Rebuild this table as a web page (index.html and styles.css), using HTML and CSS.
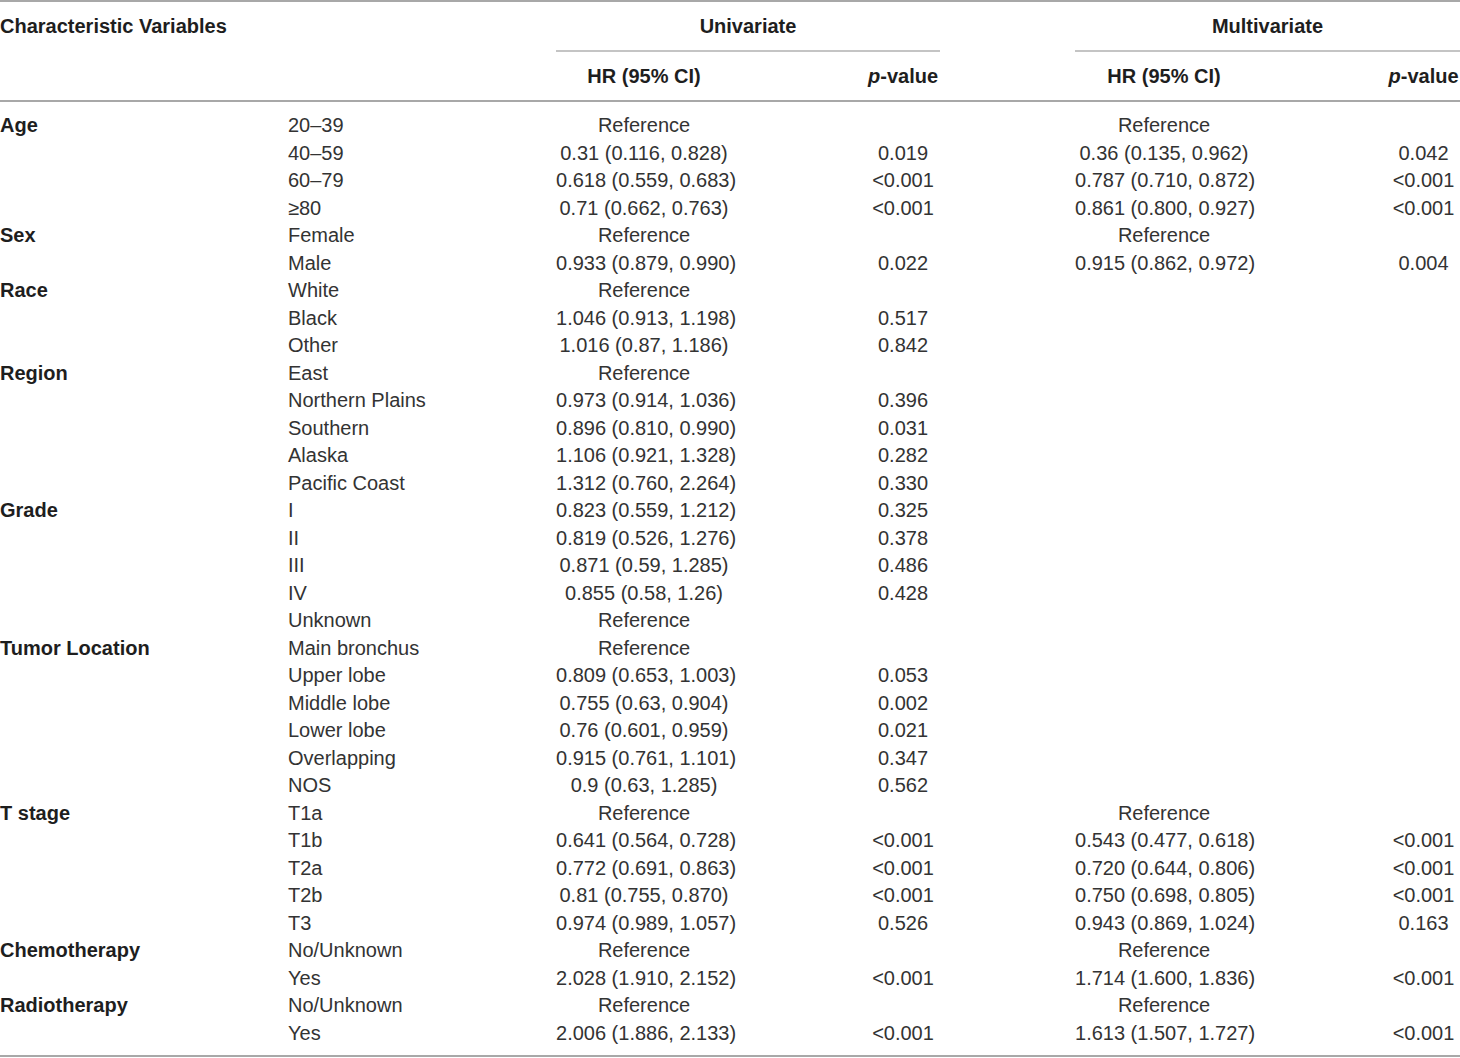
FILE: index.html
```html
<!DOCTYPE html>
<html lang="en">
<head>
<meta charset="utf-8">
<title>Cox regression table</title>
<link rel="stylesheet" href="styles.css">
</head>
<body>
<table class="t">
  <colgroup>
    <col class="c-var"><col class="c-sub"><col class="c-hr"><col class="c-p"><col class="c-gap"><col class="c-hr2"><col class="c-p2">
  </colgroup>
  <thead>
    <tr class="h1">
      <th class="lbl" colspan="2">Characteristic Variables</th>
      <th class="grp" colspan="2">Univariate</th>
      <th></th>
      <th class="grp" colspan="2">Multivariate</th>
    </tr>
    <tr class="h2">
      <th></th><th></th>
      <th class="hr">HR (95% CI)</th>
      <th class="p"><i>p</i>-value</th>
      <th></th>
      <th class="hr">HR (95% CI)</th>
      <th class="p p2"><i>p</i>-value</th>
    </tr>
  </thead>
  <tbody>
    <tr class="first"><td class="v">Age</td><td>20–39</td><td class="hr">Reference</td><td class="p"></td><td></td><td class="hr">Reference</td><td class="p p2"></td></tr>
    <tr><td class="v"></td><td>40–59</td><td class="hr">0.31 (0.116, 0.828)</td><td class="p">0.019</td><td></td><td class="hr">0.36 (0.135, 0.962)</td><td class="p p2">0.042</td></tr>
    <tr><td class="v"></td><td>60–79</td><td class="hr">0.618 (0.559, 0.683)</td><td class="p">&lt;0.001</td><td></td><td class="hr">0.787 (0.710, 0.872)</td><td class="p p2">&lt;0.001</td></tr>
    <tr><td class="v"></td><td>≥80</td><td class="hr">0.71 (0.662, 0.763)</td><td class="p">&lt;0.001</td><td></td><td class="hr">0.861 (0.800, 0.927)</td><td class="p p2">&lt;0.001</td></tr>
    <tr><td class="v">Sex</td><td>Female</td><td class="hr">Reference</td><td class="p"></td><td></td><td class="hr">Reference</td><td class="p p2"></td></tr>
    <tr><td class="v"></td><td>Male</td><td class="hr">0.933 (0.879, 0.990)</td><td class="p">0.022</td><td></td><td class="hr">0.915 (0.862, 0.972)</td><td class="p p2">0.004</td></tr>
    <tr><td class="v">Race</td><td>White</td><td class="hr">Reference</td><td class="p"></td><td></td><td class="hr"></td><td class="p p2"></td></tr>
    <tr><td class="v"></td><td>Black</td><td class="hr">1.046 (0.913, 1.198)</td><td class="p">0.517</td><td></td><td class="hr"></td><td class="p p2"></td></tr>
    <tr><td class="v"></td><td>Other</td><td class="hr">1.016 (0.87, 1.186)</td><td class="p">0.842</td><td></td><td class="hr"></td><td class="p p2"></td></tr>
    <tr><td class="v">Region</td><td>East</td><td class="hr">Reference</td><td class="p"></td><td></td><td class="hr"></td><td class="p p2"></td></tr>
    <tr><td class="v"></td><td>Northern Plains</td><td class="hr">0.973 (0.914, 1.036)</td><td class="p">0.396</td><td></td><td class="hr"></td><td class="p p2"></td></tr>
    <tr><td class="v"></td><td>Southern</td><td class="hr">0.896 (0.810, 0.990)</td><td class="p">0.031</td><td></td><td class="hr"></td><td class="p p2"></td></tr>
    <tr><td class="v"></td><td>Alaska</td><td class="hr">1.106 (0.921, 1.328)</td><td class="p">0.282</td><td></td><td class="hr"></td><td class="p p2"></td></tr>
    <tr><td class="v"></td><td>Pacific Coast</td><td class="hr">1.312 (0.760, 2.264)</td><td class="p">0.330</td><td></td><td class="hr"></td><td class="p p2"></td></tr>
    <tr><td class="v">Grade</td><td>I</td><td class="hr">0.823 (0.559, 1.212)</td><td class="p">0.325</td><td></td><td class="hr"></td><td class="p p2"></td></tr>
    <tr><td class="v"></td><td>II</td><td class="hr">0.819 (0.526, 1.276)</td><td class="p">0.378</td><td></td><td class="hr"></td><td class="p p2"></td></tr>
    <tr><td class="v"></td><td>III</td><td class="hr">0.871 (0.59, 1.285)</td><td class="p">0.486</td><td></td><td class="hr"></td><td class="p p2"></td></tr>
    <tr><td class="v"></td><td>IV</td><td class="hr">0.855 (0.58, 1.26)</td><td class="p">0.428</td><td></td><td class="hr"></td><td class="p p2"></td></tr>
    <tr><td class="v"></td><td>Unknown</td><td class="hr">Reference</td><td class="p"></td><td></td><td class="hr"></td><td class="p p2"></td></tr>
    <tr><td class="v">Tumor Location</td><td>Main bronchus</td><td class="hr">Reference</td><td class="p"></td><td></td><td class="hr"></td><td class="p p2"></td></tr>
    <tr><td class="v"></td><td>Upper lobe</td><td class="hr">0.809 (0.653, 1.003)</td><td class="p">0.053</td><td></td><td class="hr"></td><td class="p p2"></td></tr>
    <tr><td class="v"></td><td>Middle lobe</td><td class="hr">0.755 (0.63, 0.904)</td><td class="p">0.002</td><td></td><td class="hr"></td><td class="p p2"></td></tr>
    <tr><td class="v"></td><td>Lower lobe</td><td class="hr">0.76 (0.601, 0.959)</td><td class="p">0.021</td><td></td><td class="hr"></td><td class="p p2"></td></tr>
    <tr><td class="v"></td><td>Overlapping</td><td class="hr">0.915 (0.761, 1.101)</td><td class="p">0.347</td><td></td><td class="hr"></td><td class="p p2"></td></tr>
    <tr><td class="v"></td><td>NOS</td><td class="hr">0.9 (0.63, 1.285)</td><td class="p">0.562</td><td></td><td class="hr"></td><td class="p p2"></td></tr>
    <tr><td class="v">T stage</td><td>T1a</td><td class="hr">Reference</td><td class="p"></td><td></td><td class="hr">Reference</td><td class="p p2"></td></tr>
    <tr><td class="v"></td><td>T1b</td><td class="hr">0.641 (0.564, 0.728)</td><td class="p">&lt;0.001</td><td></td><td class="hr">0.543 (0.477, 0.618)</td><td class="p p2">&lt;0.001</td></tr>
    <tr><td class="v"></td><td>T2a</td><td class="hr">0.772 (0.691, 0.863)</td><td class="p">&lt;0.001</td><td></td><td class="hr">0.720 (0.644, 0.806)</td><td class="p p2">&lt;0.001</td></tr>
    <tr><td class="v"></td><td>T2b</td><td class="hr">0.81 (0.755, 0.870)</td><td class="p">&lt;0.001</td><td></td><td class="hr">0.750 (0.698, 0.805)</td><td class="p p2">&lt;0.001</td></tr>
    <tr><td class="v"></td><td>T3</td><td class="hr">0.974 (0.989, 1.057)</td><td class="p">0.526</td><td></td><td class="hr">0.943 (0.869, 1.024)</td><td class="p p2">0.163</td></tr>
    <tr><td class="v">Chemotherapy</td><td>No/Unknown</td><td class="hr">Reference</td><td class="p"></td><td></td><td class="hr">Reference</td><td class="p p2"></td></tr>
    <tr><td class="v"></td><td>Yes</td><td class="hr">2.028 (1.910, 2.152)</td><td class="p">&lt;0.001</td><td></td><td class="hr">1.714 (1.600, 1.836)</td><td class="p p2">&lt;0.001</td></tr>
    <tr><td class="v">Radiotherapy</td><td>No/Unknown</td><td class="hr">Reference</td><td class="p"></td><td></td><td class="hr">Reference</td><td class="p p2"></td></tr>
    <tr class="last"><td class="v"></td><td>Yes</td><td class="hr">2.006 (1.886, 2.133)</td><td class="p">&lt;0.001</td><td></td><td class="hr">1.613 (1.507, 1.727)</td><td class="p p2">&lt;0.001</td></tr>
  </tbody>
</table>
</body>
</html>
```
FILE: styles.css
```css
html, body {
  margin: 0;
  padding: 0;
  background: #ffffff;
}

.t {
  width: 1460px;
  table-layout: fixed;
  border-collapse: collapse;
  border-spacing: 0;
  font-family: "Liberation Sans", Arial, sans-serif;
  font-size: 20px;
  color: #333333;
  border-top: 2px solid #a8a8a8;
  border-bottom: 2px solid #a8a8a8;
}

.c-var { width: 288px; }
.c-sub { width: 268px; }
.c-hr { width: 176px; }
.c-p { width: 208px; }
.c-gap { width: 135px; }
.c-hr2 { width: 178px; }
.c-p2 { width: 207px; }

.t th,
.t td {
  padding: 0;
  white-space: nowrap;
  overflow: visible;
}

.t th {
  font-weight: bold;
  color: #1e1e1e;
}

.h1 th {
  height: 48px;
  vertical-align: middle;
}

.h1 .lbl {
  text-align: left;
}

.h1 .grp {
  text-align: center;
  border-bottom: 2px solid #c4c4c4;
}

.h2 th {
  height: 48px;
  vertical-align: middle;
  border-bottom: 2px solid #a8a8a8;
}

.t i {
  font-style: italic;
}

.t td {
  height: 27.5px;
  line-height: 27.5px;
  vertical-align: middle;
  text-align: left;
}

.t td.v {
  font-weight: bold;
  color: #1e1e1e;
}

.t .hr {
  text-align: center;
}

.t .p {
  text-align: center;
  padding-left: 134px;
}

.t .p2 {
  padding-left: 134px;
}

.first td {
  padding-top: 10px;
}

.last td {
  padding-bottom: 8px;
}
```
